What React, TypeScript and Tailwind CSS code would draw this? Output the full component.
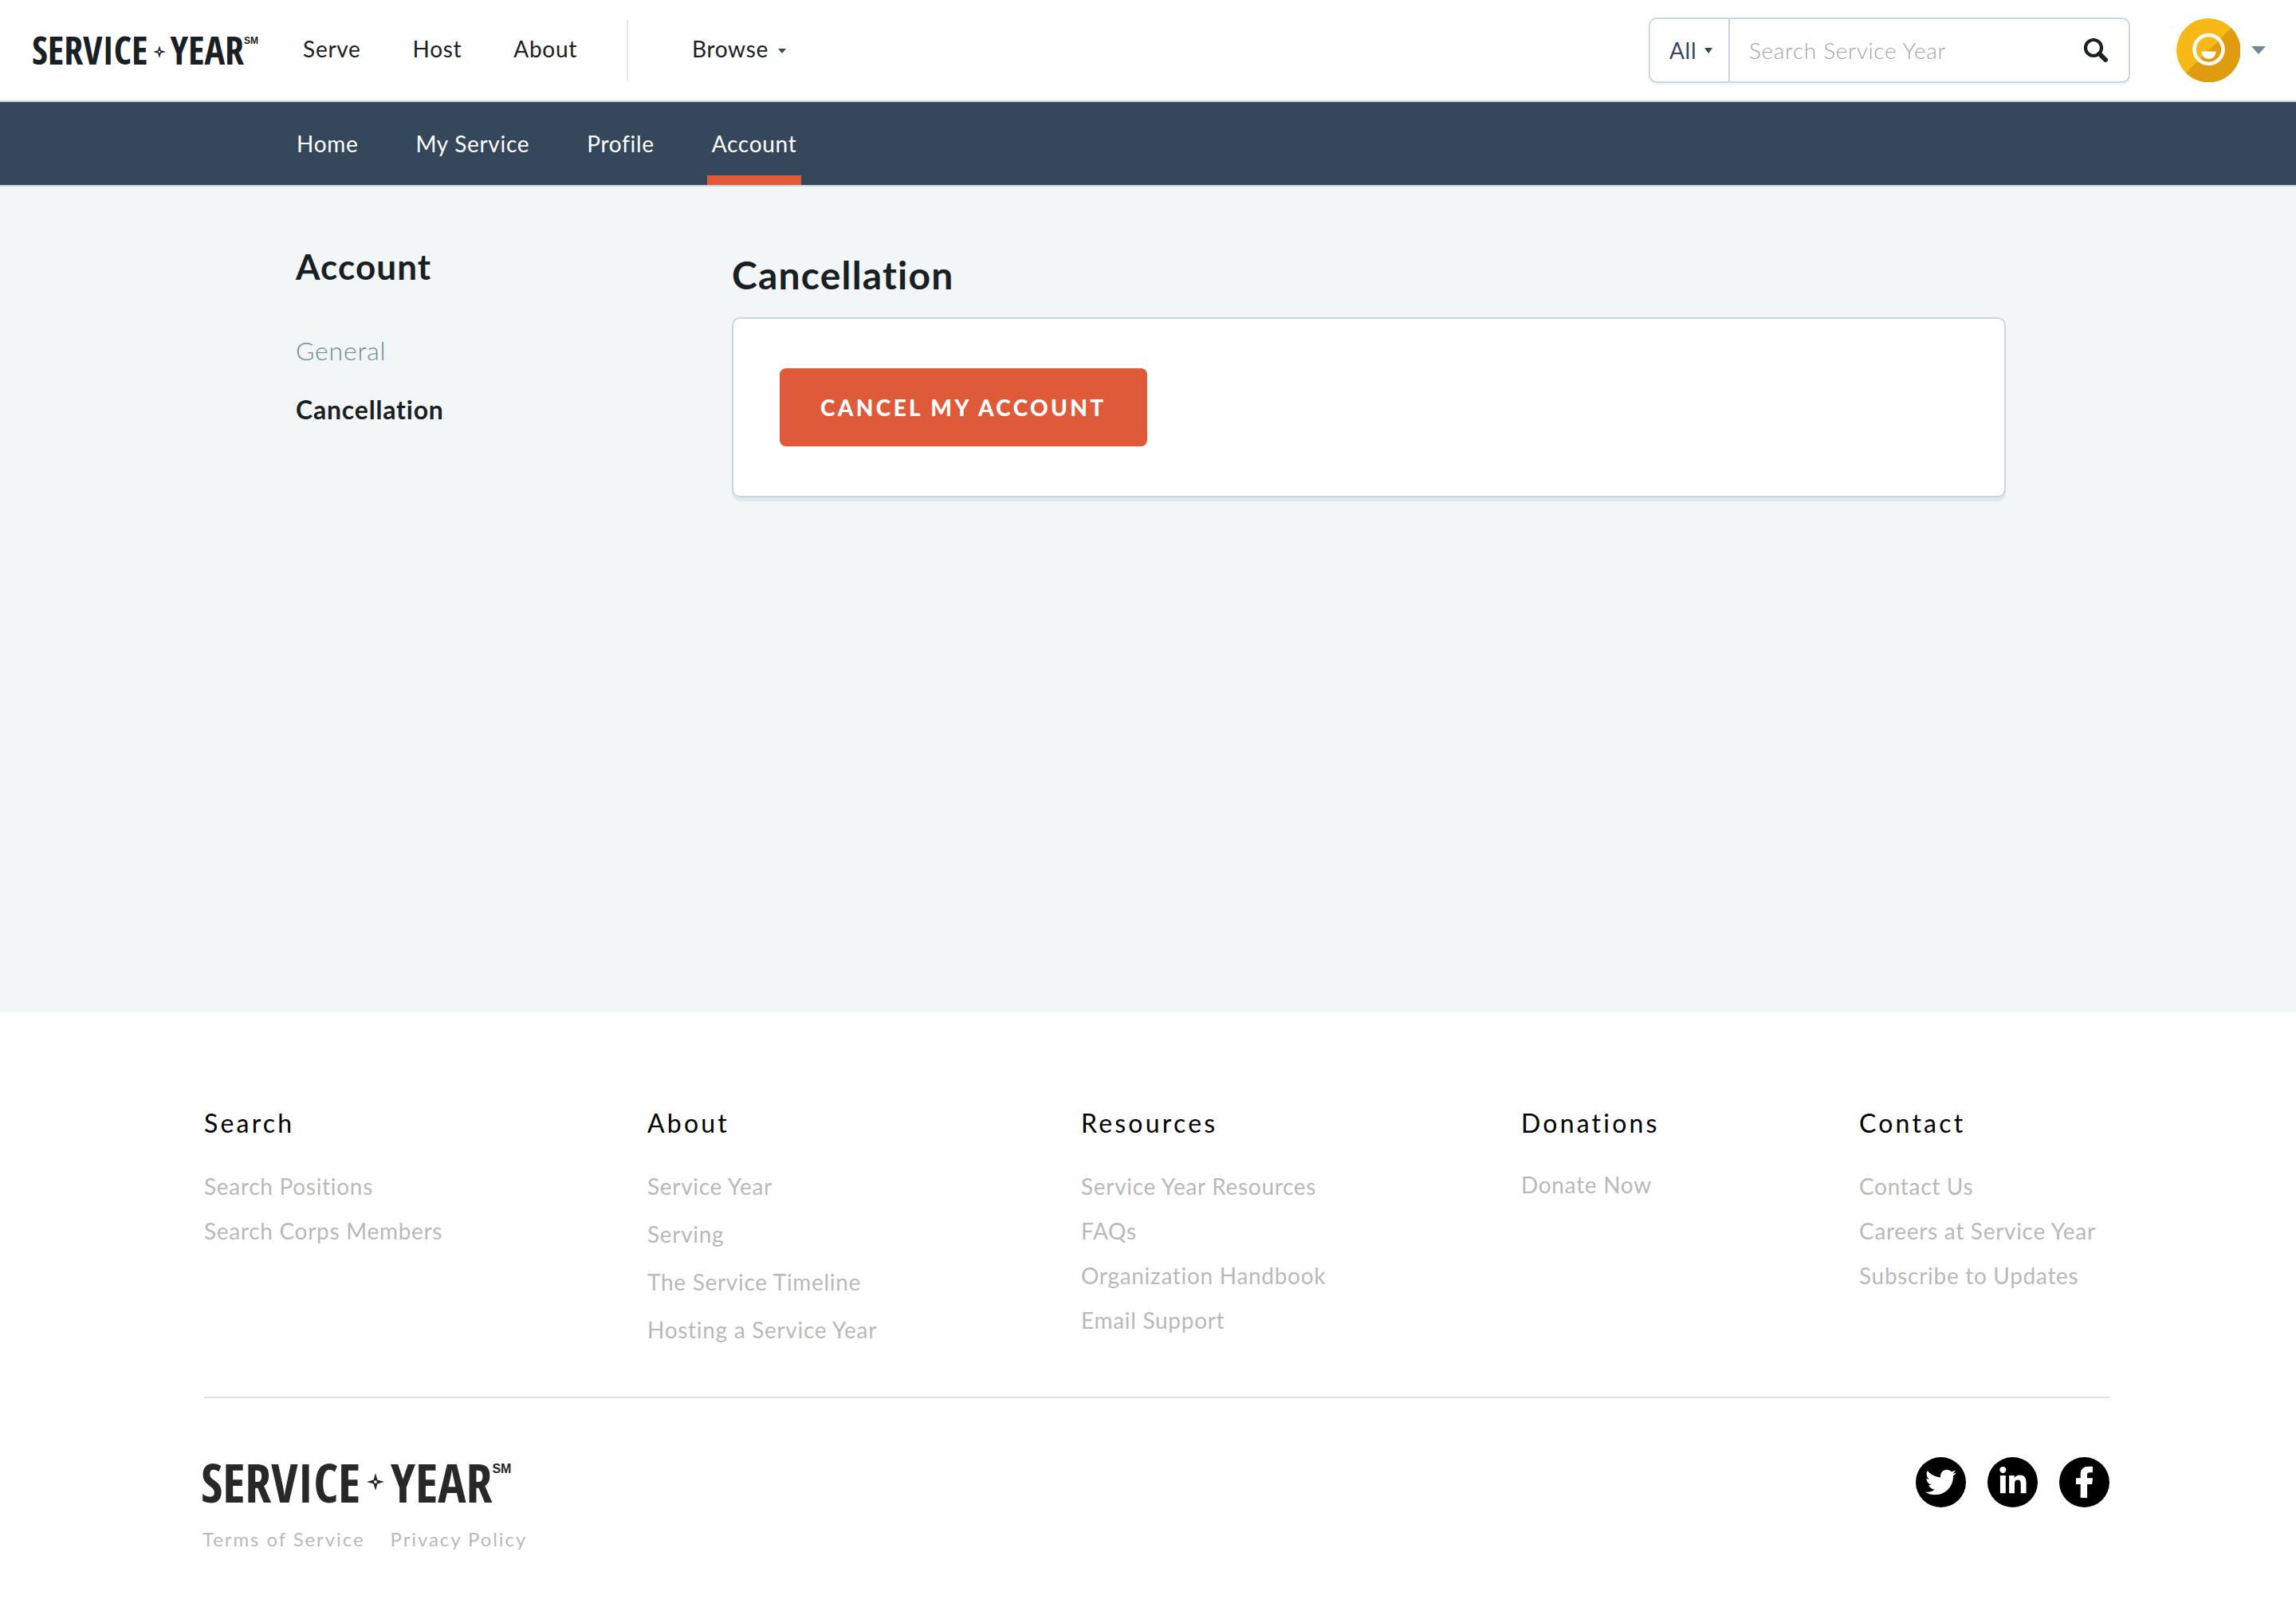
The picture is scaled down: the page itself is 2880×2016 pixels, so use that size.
import React from "react";
import { FaLinkedinIn, FaTwitter } from "react-icons/fa";

function Star({ className }: { className: string }) {
  return (
    <svg viewBox="0 0 20 20" className={className} aria-hidden="true">
      <path
        fillRule="evenodd"
        fill="currentColor"
        d="M10 0 L12.2 7.8 L20 10 L12.2 12.2 L10 20 L7.8 12.2 L0 10 L7.8 7.8 Z M10 8.3 A1.7 1.7 0 1 0 10 11.7 A1.7 1.7 0 1 0 10 8.3 Z"
      />
    </svg>
  );
}

function Caret({ className }: { className: string }) {
  return (
    <svg viewBox="0 0 10 6" preserveAspectRatio="none" className={className} aria-hidden="true">
      <path d="M0 0H10L5 6Z" fill="currentColor" />
    </svg>
  );
}

function HeaderLogo() {
  return (
    <a href="#" aria-label="Service Year" className="flex h-12 items-center text-[#192024]">
      <span className="font-['Open_Sans_Condensed',sans-serif] text-[48px] leading-[48px] font-bold">SERVICE</span>
      <Star className="mx-1.5 mt-1 size-4" />
      <span className="font-['Open_Sans_Condensed',sans-serif] text-[48px] leading-[48px] font-bold">YEAR</span>
      <span className="self-start font-['Liberation_Sans',sans-serif] text-xs leading-6 font-bold">SM</span>
    </a>
  );
}

function FooterLogo() {
  return (
    <a href="#" aria-label="Service Year" className="-ml-1 flex h-16 items-center text-[#282828]">
      <span className="font-['Open_Sans_Condensed',sans-serif] text-[66px] leading-[60px] font-bold">SERVICE</span>
      <Star className="mx-2 size-[22px]" />
      <span className="font-['Open_Sans_Condensed',sans-serif] text-[66px] leading-[60px] font-bold">YEAR</span>
      <span className="self-start font-['Liberation_Sans',sans-serif] text-base leading-8 font-bold">SM</span>
    </a>
  );
}

function Avatar() {
  return (
    <svg viewBox="0 0 80 80" className="size-20" aria-hidden="true">
      <circle cx="40" cy="40" r="40" fill="#f7b918" />
      <path d="M69 12 A40 40 0 1 1 12 68.5 Z" fill="#e09c0f" />
      <circle cx="40.5" cy="39" r="18" fill="none" stroke="#fafafa" strokeWidth="4.6" />
      <path d="M31.5 41.5H49.5C49.5 47 46 51 40.5 51S31.5 47 31.5 41.5Z" fill="#fafafa" />
    </svg>
  );
}

function Header() {
  return (
    <header className="flex h-32 items-center border-b-2 border-[#c9d6dc] bg-white pr-[38px] pl-10">
      <HeaderLogo />
      <nav aria-label="Main" className="ml-14 flex items-center gap-[65px] pb-1 text-[28px] leading-10 tracking-wide text-[#192024]">
        <a href="#">Serve</a>
        <a href="#">Host</a>
        <a href="#">About</a>
      </nav>
      <div className="ml-[62px] h-[76px] w-0.5 bg-[#e6e6e6]" />
      <button type="button" className="ml-20 flex items-center gap-3 pb-1 text-[28px] leading-10 tracking-wide text-[#192024]">
        Browse
        <Caret className="mt-1.5 h-1.5 w-2.5 text-[#34475b]" />
      </button>

      <form role="search" className="ml-auto flex h-[82px] w-[604px] items-stretch rounded-[10px] border-2 border-[#c9d6dc] bg-white shadow-[0_3px_0_#f1f5f7]">
        <div className="relative flex w-[100px] items-center border-r-2 border-[#c9d6dc]">
          <select aria-label="Search in" className="h-full w-full appearance-none bg-transparent pl-6 text-[28px] tracking-wide text-[#34475b] outline-none">
            <option>All</option>
          </select>
          <Caret className="pointer-events-none absolute right-5 h-[7px] w-2.5 text-[#34475b]" />
        </div>
        <input
          type="text"
          aria-label="Search Service Year"
          placeholder="Search Service Year"
          className="min-w-0 flex-1 bg-transparent pl-6 text-[28px] font-light tracking-wide text-[#192024] outline-none placeholder:text-[#a3a5a6]"
        />
        <button type="submit" aria-label="Search" className="flex w-[82px] items-center justify-center">
          <svg viewBox="0 0 32 32" className="size-8" fill="none" stroke="#192024" aria-hidden="true">
            <circle cx="13" cy="13" r="10" strokeWidth="4.2" />
            <path d="M20.5 20.5L28 28" strokeWidth="6" strokeLinecap="round" />
          </svg>
        </button>
      </form>

      <button type="button" aria-label="Your account" className="ml-[58px] flex items-center gap-3.5">
        <Avatar />
        <Caret className="h-2.5 w-[18px] text-[#6e8a93]" />
      </button>
    </header>
  );
}

const sections = ["Home", "My Service", "Profile", "Account"];

function SectionNav() {
  return (
    <nav aria-label="Sections" className="flex h-[106px] gap-[60px] border-b-2 border-[#c9d6dc] bg-[#35475b] pl-[366px] text-[28px] tracking-wide text-white">
      {sections.map((name) => (
        <a
          key={name}
          href="#"
          aria-current={name === "Account" ? "page" : undefined}
          className={
            name === "Account"
              ? "flex items-center border-y-12 border-t-transparent border-b-[#df5a39] px-1.5"
              : "flex items-center px-1.5"
          }
        >
          {name}
        </a>
      ))}
    </nav>
  );
}

const columns = [
  { title: "Search", list: "mt-[43px] gap-6", links: ["Search Positions", "Search Corps Members"] },
  { title: "About", list: "mt-[43px] gap-7", links: ["Service Year", "Serving", "The Service Timeline", "Hosting a Service Year"] },
  { title: "Resources", list: "mt-[43px] gap-6", links: ["Service Year Resources", "FAQs", "Organization Handbook", "Email Support"] },
  { title: "Donations", list: "mt-[41px] gap-6", links: ["Donate Now"] },
  { title: "Contact", list: "mt-[43px] gap-6", links: ["Contact Us", "Careers at Service Year", "Subscribe to Updates"] },
];

function Footer() {
  return (
    <footer className="bg-white pt-[119px] pr-[234px] pb-[69px] pl-64">
      <div className="grid grid-cols-[556fr_544fr_552fr_424fr_314fr]">
        {columns.map((column) => (
          <section key={column.title}>
            <h2 className="text-[32px] leading-10 tracking-widest text-black">{column.title}</h2>
            <ul className={`flex flex-col text-[28px] leading-8 tracking-wide text-[#b9b9b9] ${column.list}`}>
              {column.links.map((link) => (
                <li key={link}>
                  <a href="#">{link}</a>
                </li>
              ))}
            </ul>
          </section>
        ))}
      </div>
      <hr className="mt-[68px] border-t-2 border-[#e0e0e0]" />
      <div className="mt-[73px] flex items-center justify-between">
        <FooterLogo />
        <div className="flex gap-[27px]">
          <a href="#" aria-label="Twitter" className="flex size-[63px] items-center justify-center rounded-full bg-black text-white">
            <FaTwitter className="size-[39px]" />
          </a>
          <a href="#" aria-label="LinkedIn" className="flex size-[63px] items-center justify-center rounded-full bg-black text-white">
            <FaLinkedinIn className="size-[38px]" />
          </a>
          <a href="#" aria-label="Facebook" className="flex size-[63px] items-center justify-center rounded-full bg-black text-white">
            <svg viewBox="0 0 63 63" className="size-[63px]" fill="currentColor" aria-hidden="true">
              <path d="M26.7 51V34H21V26.3H26.7V21.5C26.7 15 30.5 11.7 36.5 11.7H42V19.3H38C36 19.3 35.1 20.3 35.1 22V26.3H42L41.3 34H35.1V51Z" />
            </svg>
          </a>
        </div>
      </div>
      <div className="mt-6 -ml-0.5 flex gap-8 text-[24px] leading-8 tracking-[0.08em] text-[#b9b9b9]">
        <a href="#">Terms of Service</a>
        <a href="#">Privacy Policy</a>
      </div>
    </footer>
  );
}

export default function App() {
  return (
    <div className="flex min-h-screen flex-col bg-[#f2f6f7] font-['Lato',sans-serif]">
      <Header />
      <SectionNav />
      <main className="flex flex-1 pr-[364px] pl-[371px] text-[#192024]">
        <aside className="w-[547px] shrink-0 pt-[74px]">
          <h2 className="text-[44px] leading-[52px] font-bold tracking-wide">Account</h2>
          <ul className="mt-[60px] flex flex-col gap-[34px] text-[32px] leading-10 tracking-wide">
            <li>
              <a href="#" className="font-light text-[#6e8a93]">General</a>
            </li>
            <li>
              <a href="#" aria-current="page" className="font-bold">Cancellation</a>
            </li>
          </ul>
        </aside>
        <section className="min-w-0 flex-1 pt-[83px]">
          <h1 className="text-[48px] leading-[56px] font-bold tracking-wide">Cancellation</h1>
          <div className="mt-[25px] rounded-[10px] border-2 border-[#c9d6dc] bg-white px-[58px] py-[62px] shadow-[0_5px_0_#dfe8ed]">
            <button type="button" className="h-[98px] rounded-lg bg-[#df5a39] px-[51px] text-[28px] font-black tracking-[0.12em] text-white">
              CANCEL MY ACCOUNT
            </button>
          </div>
        </section>
      </main>
      <Footer />
    </div>
  );
}
